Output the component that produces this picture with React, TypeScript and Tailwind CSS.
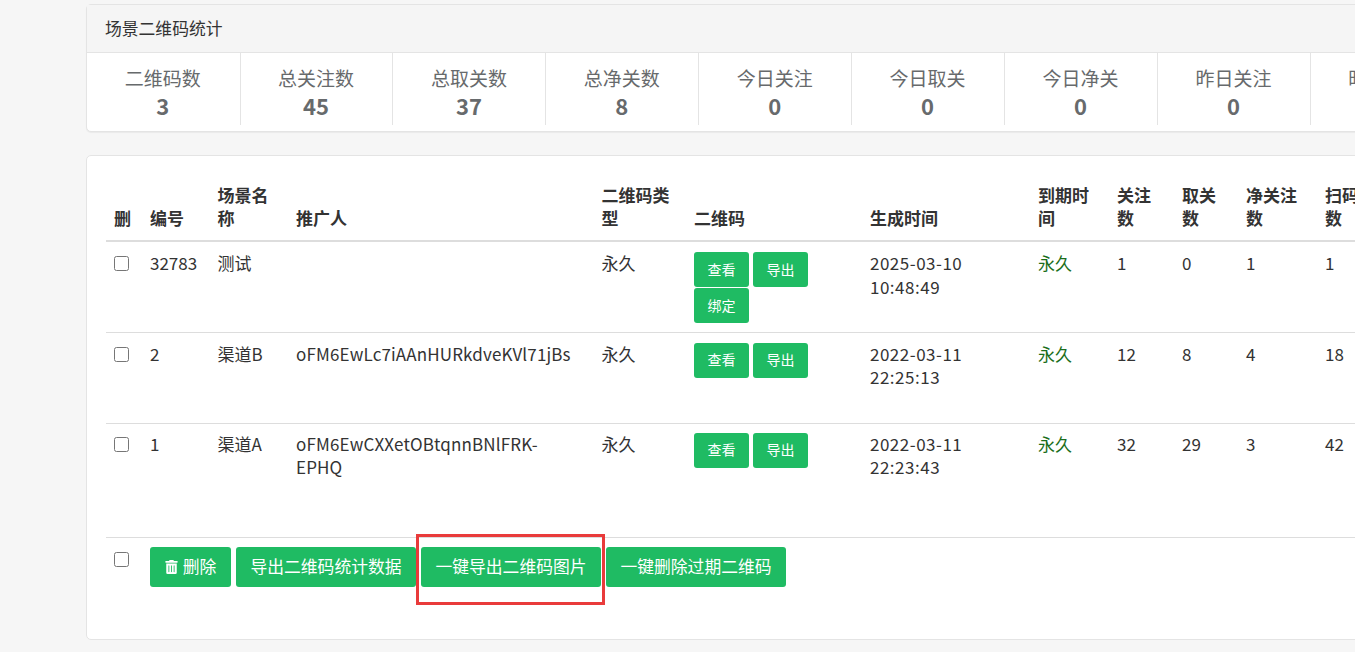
import React from "react";
import { FaTrashAlt } from "react-icons/fa";

const stats = [
  ["二维码数", "3"],
  ["总关注数", "45"],
  ["总取关数", "37"],
  ["总净关数", "8"],
  ["今日关注", "0"],
  ["今日取关", "0"],
  ["今日净关", "0"],
  ["昨日关注", "0"],
  ["昨日取关", "0"],
];

const rows = [
  { id: "32783", name: "测试", user: "", date: "2025-03-10", time: "10:48:49", a: "1", b: "0", c: "1", d: "1", bind: true, h: "h-[91px]", pt: "pt-[9px]", btnPt: "pt-[10px]" },
  { id: "2", name: "渠道B", user: "oFM6EwLc7iAAnHURkdveKVl71jBs", date: "2022-03-11", time: "22:25:13", a: "12", b: "8", c: "4", d: "18", bind: false, h: "h-[91px]", pt: "pt-[9px]", btnPt: "pt-[10px]" },
  { id: "1", name: "渠道A", user: "oFM6EwCXXetOBtqnnBNlFRK-EPHQ", date: "2022-03-11", time: "22:23:43", a: "32", b: "29", c: "3", d: "42", bind: false, h: "h-[114px]", pt: "pt-[8px]", btnPt: "pt-[9px]" },
];

const SmallBtn = ({ children }: { children: React.ReactNode }) => (
  <button className="w-[55px] h-[35px] bg-[#1fbb63] text-white text-[14px] rounded-[3px] mr-[4px] mb-px align-top">{children}</button>
);

const BigBtn = ({ children, className }: { children: React.ReactNode; className?: string }) => (
  <button className={`h-10 bg-[#1fbb63] text-white text-[16.8px] rounded-[3px] flex items-center justify-center ${className}`}>{children}</button>
);

const Th = ({ children }: { children: React.ReactNode }) => (
  <th className="px-2 pb-[11px] pt-0 text-left align-bottom font-bold text-[#333] leading-[23px]">{children}</th>
);

export default function App() {
  return (
    <div className="h-[652px] w-[1355px] overflow-hidden bg-[#f6f6f6] pt-1 pl-[86px] text-[17px] leading-[23.8px] text-[#333]" style={{ fontFamily: '"Noto Sans CJK SC", "Noto Sans", sans-serif' }}>
      <div className="w-[1500px]">
        <div className="h-[128px] border border-[#e4e4e4] rounded-[5px] bg-white shadow-[0_1px_1px_rgba(0,0,0,0.05)]">
          <div className="h-12 bg-[#f5f5f5] border-b border-[#e4e4e4] pl-[18px] flex items-center text-[16.8px] text-[#333]">场景二维码统计</div>
          <div className="flex">
            {stats.map(([label, value]) => (
              <div key={label} className="w-[152.9px] first:w-[153.6px] shrink-0 h-[72px] border-r border-[#e4e4e4] pr-px text-center text-[#676a6c] pt-[11px]">
                <div className="text-[19px] leading-[28px]">{label}</div>
                <div className="text-[22px] leading-[26px] font-bold">{value}</div>
              </div>
            ))}
          </div>
        </div>

        <div className="mt-[23px] h-[485px] border border-[#e4e4e4] rounded-[5px] bg-white pt-[27px] pl-[19px]">
          <table className="table-fixed border-collapse w-[1275px]">
            <colgroup>
              <col className="w-9" />
              <col className="w-[67.5px]" />
              <col className="w-[78.5px]" />
              <col className="w-[305.5px]" />
              <col className="w-[92.5px]" />
              <col className="w-[176px]" />
              <col className="w-[168px]" />
              <col className="w-[79px]" />
              <col className="w-[65px]" />
              <col className="w-[64px]" />
              <col className="w-[79px]" />
              <col className="w-[64px]" />
            </colgroup>
            <thead>
              <tr className="border-b-2 border-[#ddd]">
                <Th>删</Th>
                <Th>编号</Th>
                <Th>场景名称</Th>
                <Th>推广人</Th>
                <Th>二维码类型</Th>
                <Th>二维码</Th>
                <Th>生成时间</Th>
                <Th>到期时间</Th>
                <Th>关注数</Th>
                <Th>取关数</Th>
                <Th>净关注数</Th>
                <Th>扫码数</Th>
              </tr>
            </thead>
            <tbody>
              {rows.map((r) => (
                <tr key={r.id} className={`border-b border-[#ddd] align-top ${r.h}`}>
                  <td className={`px-2 ${r.btnPt}`}><input type="checkbox" className="w-[15px] h-[15px] mt-[4px] block" /></td>
                  <td className={`px-2 ${r.pt}`}>{r.id}</td>
                  <td className={`px-2 ${r.pt}`}>{r.name}</td>
                  <td className={`pl-2 pr-5 tracking-[0.15px] ${r.pt}`}>{r.user}</td>
                  <td className={`px-2 ${r.pt}`}>永久</td>
                  <td className={`px-2 ${r.btnPt}`}>
                    <SmallBtn>查看</SmallBtn>
                    <SmallBtn>导出</SmallBtn>
                    {r.bind && <SmallBtn>绑定</SmallBtn>}
                  </td>
                  <td className={`px-2 tracking-[0.5px] ${r.pt}`}>{r.date}<br />{r.time}</td>
                  <td className={`px-2 text-[#1b6e1b] ${r.pt}`}>永久</td>
                  <td className={`px-2 ${r.pt}`}>{r.a}</td>
                  <td className={`px-2 ${r.pt}`}>{r.b}</td>
                  <td className={`px-2 ${r.pt}`}>{r.c}</td>
                  <td className={`px-2 ${r.pt}`}>{r.d}</td>
                </tr>
              ))}
            </tbody>
          </table>
          <div className="relative flex items-start pt-[9px] pl-2">
            <input type="checkbox" className="w-[15px] h-[15px] mt-[5px] mr-[21px]" />
            <div className="flex gap-[5px]">
              <BigBtn className="w-[81px]"><FaTrashAlt className="w-[13px] h-[14px] mr-[5px]" />删除</BigBtn>
              <BigBtn className="w-[180px]">导出二维码统计数据</BigBtn>
              <BigBtn className="w-[180px]">一键导出二维码图片</BigBtn>
              <BigBtn className="w-[180px]">一键删除过期二维码</BigBtn>
            </div>
            <div className="absolute left-[310px] top-[-4px] w-[189px] h-[71px] border-[3px] border-[#e93b3b]" />
          </div>
        </div>
      </div>
    </div>
  );
}
